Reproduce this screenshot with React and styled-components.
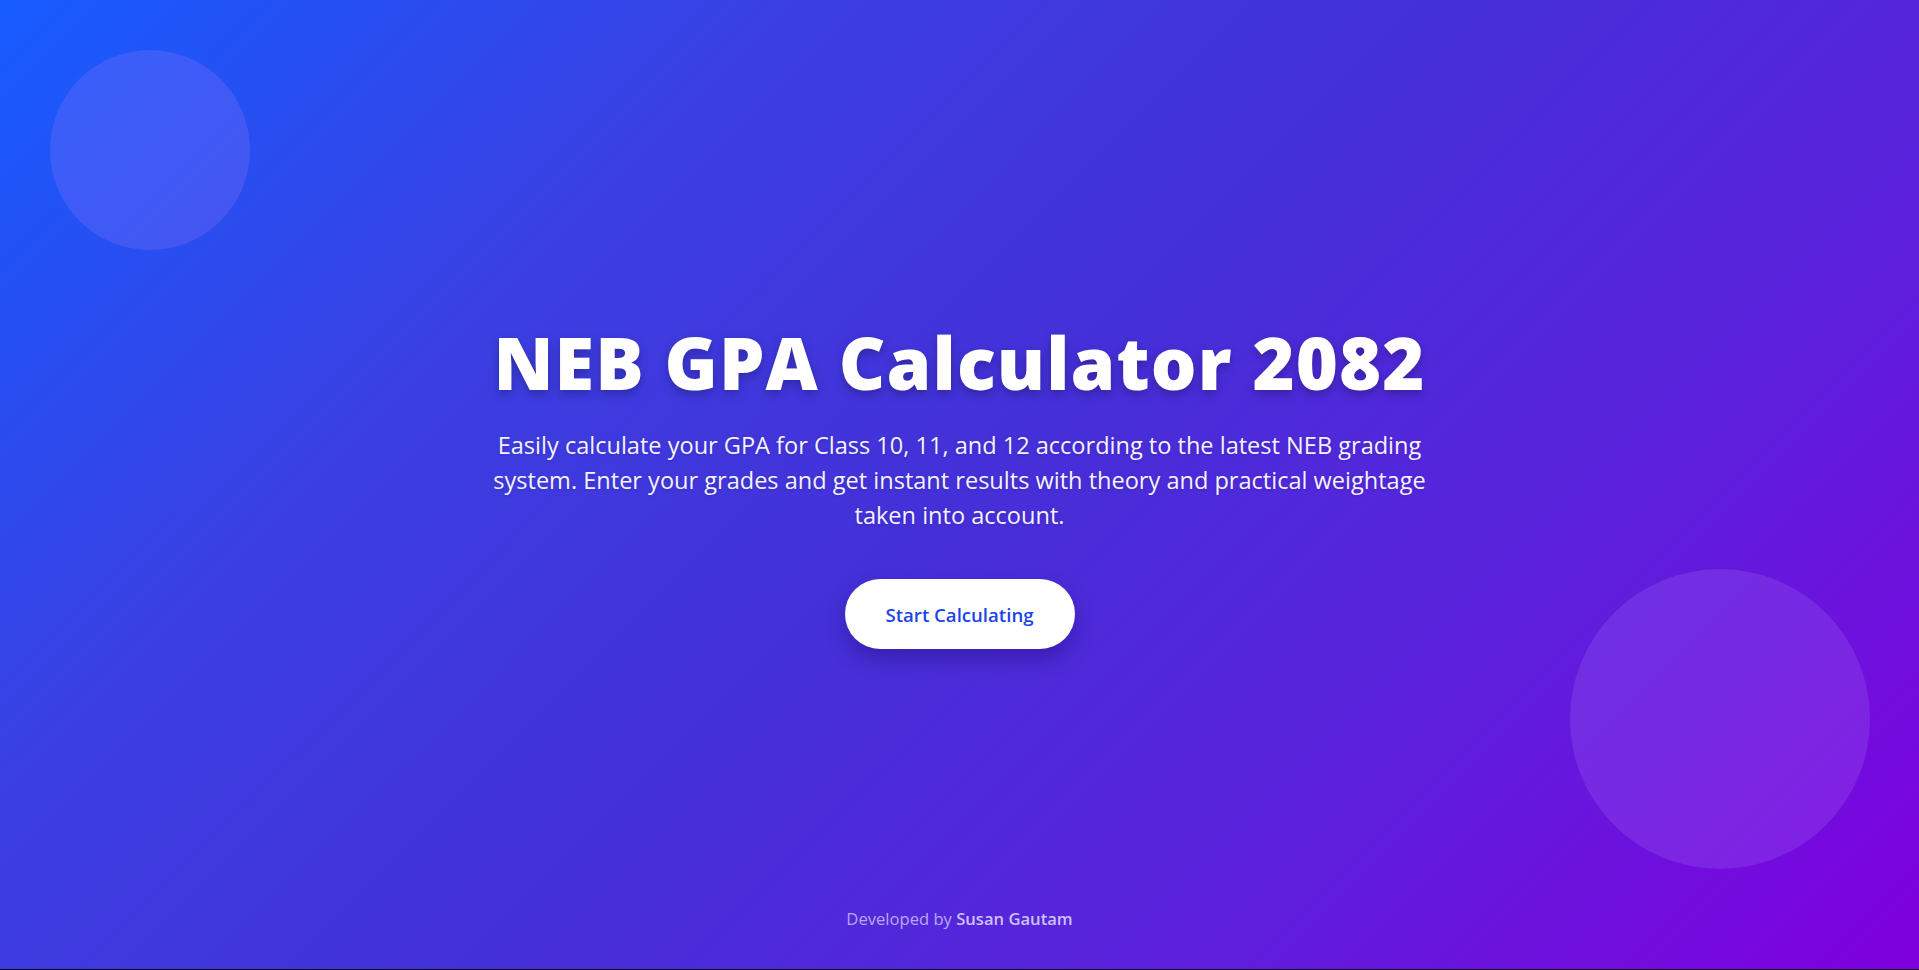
import React from "react";
import styled, { createGlobalStyle } from "styled-components";

const Global = createGlobalStyle`
  html, body { margin: 0; padding: 0; background: #0b0b12; }
  body { font-family: "Open Sans", "Noto Sans", "Liberation Sans", sans-serif; }
  * { box-sizing: border-box; }
`;

const Page = styled.div`
  position: relative;
  overflow: hidden;
  min-height: calc(100vh - 1px);
  display: flex;
  align-items: center;
  justify-content: center;
  background: linear-gradient(135deg, #165cff 0%, #3b3fe2 28%, #4430d8 50%, #5a22dc 72%, #8000de 100%);
  color: #fff;
`;

const Bubble = styled.div`
  position: absolute;
  width: ${(p) => p.$size}px;
  height: ${(p) => p.$size}px;
  border-radius: 50%;
  background: rgba(176, 130, 255, 0.2);
  ${(p) => p.$pos}
`;

const Hero = styled.main`
  display: flex;
  flex-direction: column;
  align-items: center;
  text-align: center;
  padding: 3px 24px 0;
`;

const Title = styled.h1`
  margin: 0;
  font-size: 72px;
  line-height: 1.1;
  font-weight: 800;
  letter-spacing: 1.1px;
  text-shadow: 0 4px 10px rgba(0, 0, 0, 0.25);
`;

const Lead = styled.p`
  margin: 26px 0 0;
  max-width: 980px;
  font-size: 23.55px;
  line-height: 35px;
  font-weight: 400;
  color: #f4f2ff;
  text-shadow: 0 1px 3px rgba(0, 0, 0, 0.15);
`;

const CTA = styled.button`
  margin-top: 46px;
  height: 70px;
  padding: 0 41px;
  border: none;
  border-radius: 999px;
  background: #fff;
  color: #1d44e6;
  font-family: inherit;
  font-size: 18.6px;
  font-weight: 600;
  cursor: pointer;
  box-shadow: 0 10px 20px rgba(20, 0, 80, 0.3);
`;

const Footer = styled.footer`
  position: absolute;
  left: 0;
  right: 0;
  bottom: 38px;
  text-align: center;
  font-size: 16.6px;
  line-height: 24px;
  color: rgba(255, 255, 255, 0.6);
`;

const Name = styled.span`
  font-weight: 600;
  color: rgba(255, 255, 255, 0.72);
`;

export default function App() {
  return (
    <>
      <Global />
      <Page>
        <Bubble $size={200} $pos="top: 50px; left: 50px;" />
        <Bubble $size={300} $pos="bottom: 100px; right: 49px;" />
        <Hero>
          <Title>NEB GPA Calculator 2082</Title>
          <Lead>
            Easily calculate your GPA for Class 10, 11, and 12 according to the latest NEB grading
            system. Enter your grades and get instant results with theory and practical weightage
            taken into account.
          </Lead>
          <CTA>Start Calculating</CTA>
        </Hero>
        <Footer>
          Developed by <Name>Susan Gautam</Name>
        </Footer>
      </Page>
    </>
  );
}
